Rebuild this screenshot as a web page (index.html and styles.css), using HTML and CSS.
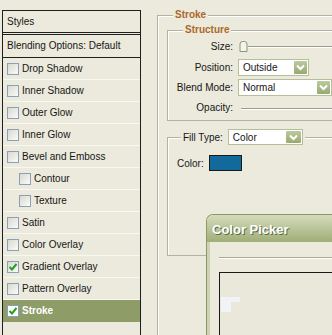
FILE: index.html
```html
<!DOCTYPE html>
<html lang="en">
<head>
    <meta charset="UTF-8">
    <title>Layer Style - Stroke</title>
    <link rel="stylesheet" href="styles.css">
</head>
<body>
    <div class="dialog">
        <div class="styles-list">
            <div class="list-head">Styles</div>
            <div class="list-blend">Blending Options: Default</div>
            <div class="list-item"><span class="check"></span>Drop Shadow</div>
            <div class="list-item"><span class="check"></span>Inner Shadow</div>
            <div class="list-item"><span class="check"></span>Outer Glow</div>
            <div class="list-item"><span class="check"></span>Inner Glow</div>
            <div class="list-item"><span class="check"></span>Bevel and Emboss</div>
            <div class="list-item sub"><span class="check"></span>Contour</div>
            <div class="list-item sub"><span class="check"></span>Texture</div>
            <div class="list-item"><span class="check"></span>Satin</div>
            <div class="list-item"><span class="check"></span>Color Overlay</div>
            <div class="list-item">
                <span class="check"><svg width="10" height="10" viewBox="0 0 10 10"><polyline points="1.5,5 4,7.5 8.5,2" fill="none" stroke="#21a121" stroke-width="2"/></svg></span>Gradient Overlay
            </div>
            <div class="list-item"><span class="check"></span>Pattern Overlay</div>
            <div class="list-item active">
                <span class="check"><svg width="10" height="10" viewBox="0 0 10 10"><polyline points="1.5,5 4,7.5 8.5,2" fill="none" stroke="#21a121" stroke-width="2"/></svg></span>Stroke
            </div>
        </div>

        <fieldset class="group outer">
            <legend class="title">Stroke</legend>
            <fieldset class="group inner structure">
                <legend class="title sub-title">Structure</legend>
                <div class="row first">
                    <span class="label">Size:</span>
                    <div class="slider">
                        <svg class="thumb" width="9" height="11" viewBox="0 0 9 11"><path d="M1 3 Q1 0.5 3.5 0.5 L5.5 0.5 Q8 0.5 8 3 L8 10.5 L1 10.5 Z" fill="#f3f4ec" stroke="#8b9874"/></svg>
                        <span class="track"></span>
                    </div>
                </div>
                <div class="row">
                    <span class="label">Position:</span>
                    <div class="select position">Outside<span class="arrow"><svg width="9" height="7" viewBox="0 0 9 7"><polyline points="1,1.5 4.5,5 8,1.5" fill="none" stroke="#fff" stroke-width="2"/></svg></span></div>
                </div>
                <div class="row">
                    <span class="label">Blend Mode:</span>
                    <div class="select blend">Normal<span class="arrow"><svg width="9" height="7" viewBox="0 0 9 7"><polyline points="1,1.5 4.5,5 8,1.5" fill="none" stroke="#fff" stroke-width="2"/></svg></span></div>
                </div>
                <div class="row">
                    <span class="label">Opacity:</span>
                    <div class="slider opacity"><span class="track"></span></div>
                </div>
            </fieldset>
            <fieldset class="group inner fill">
                <legend class="fill-legend">
                    <span>Fill Type:</span>
                    <div class="select fill-type">Color<span class="arrow"><svg width="9" height="7" viewBox="0 0 9 7"><polyline points="1,1.5 4.5,5 8,1.5" fill="none" stroke="#fff" stroke-width="2"/></svg></span></div>
                </legend>
                <div class="color-row">
                    <span>Color:</span>
                    <span class="swatch"></span>
                </div>
            </fieldset>
        </fieldset>

        <div class="picker">
            <div class="picker-title">Color Picker</div>
            <div class="picker-body">
                <div class="picker-rule"></div>
                <div class="picker-field">
                    <svg class="picker-blob" width="20" height="15" viewBox="0 0 20 15"><path d="M0 0 H19 V5 H10 V15 H0 Z" fill="#f1f3f7"/></svg>
                </div>
            </div>
        </div>
    </div>
</body>
</html>
```

FILE: styles.css
```css
* {
    box-sizing: border-box;
}
body {
    margin: 0;
    width: 332px;
    height: 335px;
    overflow: hidden;
    background: #ebeadc;
    font-family: "Liberation Sans", Arial, sans-serif;
    font-size: 10px;
    color: #161616;
}
.dialog {
    position: relative;
    display: flex;
    align-items: flex-start;
    height: 335px;
}
.styles-list {
    flex: none;
    width: 139px;
    height: 325px;
    margin: 10px 0 0 2px;
    border: 1px solid #1f1f1f;
    border-bottom: none;
}
.list-head {
    height: 24px;
    line-height: 21px;
    padding-left: 4px;
    border-bottom: 3px double #1f1f1f;
}
.list-blend {
    height: 23px;
    line-height: 21px;
    padding-left: 4px;
    border-bottom: 1px solid #1f1f1f;
}
.list-item {
    display: flex;
    align-items: center;
    gap: 3px;
    height: 22px;
    padding-left: 4px;
    border-bottom: 1px solid #f8f8f1;
}
.list-item.sub {
    padding-left: 16px;
}
.list-item.active {
    background: #8e9c68;
    color: #fff;
    font-weight: bold;
    border-bottom-color: #8e9c68;
}
.check {
    display: flex;
    align-items: center;
    justify-content: center;
    width: 12px;
    height: 12px;
    border: 1px solid #8a9fb8;
    background: linear-gradient(135deg, #d9d9d0, #fbfbf8);
}
.active .check {
    background: #fff;
}

/* fieldsets */
.group {
    margin: 0;
    min-width: 0;
    border: 1px solid #b2b1a2;
    border-right: none;
    box-shadow: inset 1px 1px 0 #fff;
}
.outer {
    flex: none;
    width: 175px;
    height: 326px;
    margin: 9px 0 0 16px;
    padding: 3px 0 0 9px;
    border-bottom: none;
}
.title {
    margin-left: 6px;
    padding: 0 2px;
    line-height: 12px;
    font-weight: bold;
    color: #ac682a;
    background: #ebeadc;
}
.sub-title {
    margin-left: 8px;
}
.inner {
    padding: 0 0 3px 7px;
}
.row {
    display: flex;
    align-items: center;
    gap: 5px;
    height: 20px;
}
.row.first {
    height: 21px;
}
.label {
    width: 58px;
    text-align: right;
}
.slider {
    display: flex;
    align-items: center;
    flex: 1;
    margin-left: 1px;
}
.thumb {
    display: block;
    flex: none;
}
.track {
    flex: 1;
    height: 2px;
    border-top: 1px solid #9c9b8d;
    border-bottom: 1px solid #fff;
}
.opacity {
    margin: 3px 0 0 3px;
}
.select {
    display: flex;
    align-items: center;
    justify-content: space-between;
    height: 17px;
    padding: 0 1px 0 4px;
    background: #fff;
    border: 1px solid #b4bf9c;
}
.position {
    width: 71px;
}
.blend {
    width: 94px;
}
.arrow {
    display: flex;
    align-items: center;
    justify-content: center;
    width: 13px;
    height: 13px;
    border-radius: 1px;
    background: linear-gradient(#bccaa0, #98aa6e);
}
.fill {
    margin-top: 8px;
    padding: 10px 0 84px 7px;
}
.fill-legend {
    display: flex;
    align-items: center;
    gap: 5px;
    margin-left: 6px;
    padding: 0 2px;
    background: #ebeadc;
}
.fill-type {
    width: 75px;
    height: 16px;
}
.fill-type .arrow {
    width: 15px;
    height: 12px;
}
.color-row {
    display: flex;
    align-items: center;
    gap: 5px;
    padding-left: 2px;
}
.swatch {
    width: 33px;
    height: 16px;
    background: #116a9b;
    border: 1px solid #1a1a1a;
}

/* color picker window */
.picker {
    position: absolute;
    left: 206px;
    top: 214px;
    width: 126px;
    height: 121px;
    border: 1px solid #8b9868;
    border-right: none;
    border-bottom: none;
    border-radius: 7px 0 0 0;
    background: #ebeadc;
}
.picker-title {
    height: 27px;
    padding-left: 5px;
    line-height: 29px;
    border-radius: 6px 0 0 0;
    background: linear-gradient(#d4dbbb, #a0ae77);
    color: #fff;
    font-size: 13px;
    font-weight: bold;
    text-shadow: 1px 1px 0 #5e6a45;
}
.picker-body {
    height: 93px;
    padding: 15px 0 0 9px;
    border-left: 3px solid #cdd4b4;
}
.picker-rule {
    height: 2px;
    border-top: 1px solid #aca899;
    border-bottom: 1px solid #fff;
}
.picker-field {
    height: 63px;
    position: relative;
    margin-top: 13px;
    border: 1px solid #1a1a1a;
    border-right: none;
    border-bottom: none;
    background: #e9e8da;
}
.picker-blob {
    position: absolute;
    left: 1px;
    top: 24px;
}
```
